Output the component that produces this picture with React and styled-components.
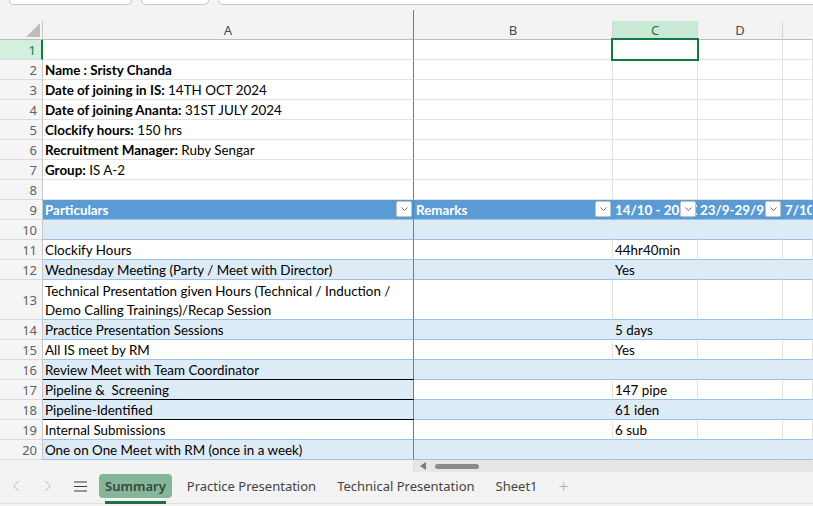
import styled, { createGlobalStyle } from 'styled-components';

const COLS = '43px 371px 199px 85px 85px 1fr';
const CELL_FONT = "Lato, 'Liberation Sans', sans-serif";
const UI_FONT = "'Noto Sans', 'Open Sans', sans-serif";

const fills = {
  plain: { bg: '#ffffff', right: '#e1e1e1', bottom: '#e1e1e1' },
  head: { bg: '#5b9bd5', right: '#5b9bd5', bottom: '#9bc2e6' },
  band: { bg: '#ddebf7', right: '#ddebf7', bottom: '#9bc2e6' },
  white: { bg: '#ffffff', right: '#e1e1e1', bottom: '#9bc2e6' },
};

const infoRows = [
  { n: 1 },
  { n: 2, label: 'Name : Sristy Chanda' },
  { n: 3, label: 'Date of joining in IS:', value: ' 14TH OCT 2024' },
  { n: 4, label: 'Date of joining Ananta:', value: ' 31ST JULY 2024' },
  { n: 5, label: 'Clockify hours:', value: ' 150 hrs' },
  { n: 6, label: 'Recruitment Manager:', value: ' Ruby Sengar' },
  { n: 7, label: 'Group:', value: ' IS A-2' },
  { n: 8 },
];

const headers = ['Particulars', 'Remarks', '14/10 - 20/10', '23/9-29/9', '7/10-13/10'];

const tableRows = [
  { n: 10, kind: 'band' },
  { n: 11, kind: 'white', a: 'Clockify Hours', c: '44hr40min' },
  { n: 12, kind: 'band', a: 'Wednesday Meeting (Party / Meet with Director)', c: 'Yes' },
  {
    n: 13,
    kind: 'white',
    h: 40,
    a: ['Technical Presentation given Hours (Technical / Induction /', 'Demo Calling Trainings)/Recap Session'],
  },
  { n: 14, kind: 'band', a: 'Practice Presentation Sessions', c: '5 days' },
  { n: 15, kind: 'white', a: 'All IS meet by RM', c: 'Yes' },
  { n: 16, kind: 'band', a: 'Review Meet with Team Coordinator', edge: true },
  { n: 17, kind: 'white', aFill: 'band', a: 'Pipeline &\u00a0 Screening', c: '147 pipe', edge: true },
  { n: 18, kind: 'band', a: 'Pipeline-Identified', c: '61 iden', edge: true },
  { n: 19, kind: 'white', a: 'Internal Submissions', c: '6 sub' },
  { n: 20, kind: 'band', a: 'One on One Meet with RM (once in a week)' },
];

const tabs = ['Practice Presentation', 'Technical Presentation', 'Sheet1'];

const Chevron = () => (
  <svg width="9" height="6" viewBox="0 0 9 6">
    <path d="M1.5 1.5 L4.5 4.5 L7.5 1.5" fill="none" stroke="#707070" strokeWidth="1" />
  </svg>
);

const App = () => {
  return (
    <>
      <GlobalStyle />
      <Window>
        <TopStrip>
          <Field $w="123px" />
          <Field $w="68px" />
          <Field $w="620px" />
        </TopStrip>

        <HeaderRow>
          <Corner>
            <svg width="14" height="14" viewBox="0 0 14 14">
              <polygon points="14,0 14,14 0,14" fill="#bdbdbd" />
            </svg>
          </Corner>
          <ColHead $frozen>A</ColHead>
          <ColHead>B</ColHead>
          <ColHead $active>C</ColHead>
          <ColHead>D</ColHead>
          <ColHead $last />
        </HeaderRow>

        <Sheet>
          {infoRows.map((r) => (
            <SheetRow key={r.n}>
              <RowHead $active={r.n === 1}>{r.n}</RowHead>
              <Cell $kind="plain" $frozen>
                {r.label && <b>{r.label}</b>}
                {r.value}
              </Cell>
              <Cell $kind="plain" />
              <Cell $kind="plain">{r.n === 1 && <Selection />}</Cell>
              <Cell $kind="plain" />
              <Cell $kind="plain" />
            </SheetRow>
          ))}

          <SheetRow>
            <RowHead>9</RowHead>
            {headers.map((h, i) => (
              <Cell key={h} $kind="head" $frozen={i === 0}>
                {h}
                {i < 4 && (
                  <FilterBtn>
                    <Chevron />
                  </FilterBtn>
                )}
              </Cell>
            ))}
          </SheetRow>

          {tableRows.map((r) => (
            <SheetRow key={r.n} $h={r.h}>
              <RowHead>{r.n}</RowHead>
              <Cell $kind={r.aFill || r.kind} $frozen $edge={r.edge}>
                {Array.isArray(r.a)
                  ? r.a.map((line) => <Line key={line}>{line}</Line>)
                  : r.a}
              </Cell>
              <Cell $kind={r.kind} />
              <Cell $kind={r.kind}>{r.c}</Cell>
              <Cell $kind={r.kind} />
              <Cell $kind={r.kind} />
            </SheetRow>
          ))}
        </Sheet>

        <ScrollStrip>
          <ScrollGap />
          <ScrollTrack>
            <svg width="6" height="8" viewBox="0 0 6 8">
              <polygon points="6,0 6,8 0,4" fill="#7a7a7a" />
            </svg>
            <Thumb />
          </ScrollTrack>
        </ScrollStrip>

        <TabBar>
          <NavGroup>
            <NavBtn>
              <svg width="8" height="12" viewBox="0 0 8 12">
                <path d="M6.5 1 L1.5 6 L6.5 11" fill="none" stroke="#b4b4b4" strokeWidth="1" />
              </svg>
            </NavBtn>
            <NavBtn>
              <svg width="8" height="12" viewBox="0 0 8 12">
                <path d="M1.5 1 L6.5 6 L1.5 11" fill="none" stroke="#b4b4b4" strokeWidth="1" />
              </svg>
            </NavBtn>
            <NavBtn $menu>
              <svg width="13" height="11" viewBox="0 0 13 11">
                <path d="M0 1 H13 M0 5.5 H13 M0 10 H13" stroke="#3c3c3c" strokeWidth="1.2" />
              </svg>
            </NavBtn>
          </NavGroup>
          <Tab $active>Summary</Tab>
          {tabs.map((t) => (
            <Tab key={t}>{t}</Tab>
          ))}
          <AddTab>+</AddTab>
        </TabBar>
      </Window>
    </>
  );
};

export default App;

// Styled Components
const GlobalStyle = createGlobalStyle`
  body {
    margin: 0;
    background: #ffffff;
    overflow: hidden;
  }
`;

const Window = styled.div`
  width: 813px;
  height: 506px;
  display: flex;
  flex-direction: column;
  background: #f3f3f3;
  overflow: hidden;
`;

const TopStrip = styled.div`
  height: 10px;
  display: flex;
  align-items: flex-start;
  gap: 9px;
  padding-left: 9px;
`;

const Field = styled.div`
  flex: none;
  width: ${(p) => p.$w};
  height: 5px;
  box-sizing: border-box;
  background: #ffffff;
  border: 1px solid #c4c4c4;
  border-top: none;
  border-radius: 0 0 5px 5px;
`;

const HeaderRow = styled.div`
  display: grid;
  grid-template-columns: ${COLS};
  height: 30px;
  align-items: end;
`;

const Corner = styled.div`
  height: 19px;
  box-sizing: border-box;
  display: flex;
  justify-content: flex-end;
  align-items: flex-end;
  padding: 0 2px 2px 0;
  border-right: 1px solid #c6c6c6;
  border-bottom: 1px solid #bdbdbd;
`;

const ColHead = styled.div`
  box-sizing: border-box;
  height: ${(p) => (p.$frozen ? '30px' : '19px')};
  display: flex;
  align-items: center;
  justify-content: center;
  padding-top: ${(p) => (p.$frozen ? '10px' : '0')};
  padding-bottom: ${(p) => (p.$frozen ? '0' : '1px')};
  font: 13px ${UI_FONT};
  color: ${(p) => (p.$active ? '#107c41' : '#4a4a4a')};
  background: ${(p) => (p.$active ? '#caead7' : 'transparent')};
  border-right: 1px solid ${(p) => (p.$frozen ? '#7a7a7a' : p.$last ? 'transparent' : '#d6d6d6')};
  border-bottom: 1px solid #bdbdbd;
`;

const Sheet = styled.div`
  display: flex;
  flex-direction: column;
  background: #ffffff;
`;

const SheetRow = styled.div`
  display: grid;
  grid-template-columns: ${COLS};
  height: ${(p) => p.$h || 20}px;
  overflow: visible;
`;

const RowHead = styled.div`
  box-sizing: border-box;
  display: flex;
  align-items: center;
  justify-content: flex-end;
  padding-right: 5px;
  font: 13px ${UI_FONT};
  color: ${(p) => (p.$active ? '#107c41' : '#616161')};
  background: ${(p) => (p.$active ? '#d3efde' : '#f5f5f5')};
  border-right: ${(p) => (p.$active ? '2px solid #107c41' : '1px solid #c6c6c6')};
  border-bottom: 1px solid #dadada;
`;

const Cell = styled.div`
  position: relative;
  box-sizing: border-box;
  min-height: 0;
  padding: 1px 2px 0;
  font: ${(p) => (p.$kind === 'head' ? '700' : '400')} 13.4px ${CELL_FONT};
  line-height: 18px;
  white-space: nowrap;
  overflow: ${(p) => (p.$kind === 'head' ? 'hidden' : 'visible')};
  color: ${(p) => (p.$kind === 'head' ? '#ffffff' : '#000000')};
  background: ${(p) => fills[p.$kind].bg};
  border-right: 1px solid ${(p) => (p.$frozen ? '#7a7a7a' : fills[p.$kind].right)};
  border-bottom: 1px solid ${(p) => (p.$edge ? '#000000' : fills[p.$kind].bottom)};

  b {
    font-weight: 700;
  }
`;

const Line = styled.div`
  height: 19px;
  line-height: 20px;
`;

const Selection = styled.span`
  position: absolute;
  top: -2px;
  left: -2px;
  right: -2px;
  bottom: -2px;
  border: 2px solid #107c41;
  z-index: 2;
`;

const FilterBtn = styled.span`
  position: absolute;
  top: 1px;
  right: 1px;
  width: 16px;
  height: 16px;
  box-sizing: border-box;
  display: flex;
  align-items: center;
  justify-content: center;
  background: #ffffff;
  border: 1px solid #c2c2c2;
  border-radius: 2px;
`;

const ScrollStrip = styled.div`
  display: flex;
  height: 12px;
`;

const ScrollGap = styled.div`
  width: 414px;
  box-sizing: border-box;
  border-right: 1px solid #e0e0e0;
`;

const ScrollTrack = styled.div`
  flex: 1;
  display: flex;
  align-items: center;
  gap: 9px;
  padding-left: 6px;
  background: #e6e6e6;
`;

const Thumb = styled.div`
  width: 44px;
  height: 5px;
  border-radius: 3px;
  background: #8a8a8a;
`;

const TabBar = styled.div`
  height: 32px;
  display: flex;
  align-items: flex-start;
  gap: 9px;
  padding-top: 2px;
  box-sizing: border-box;
  border-bottom: 1px solid #e2e2e2;
  font: 13px ${UI_FONT};
`;

const NavGroup = styled.div`
  width: 90px;
  display: flex;
`;

const NavBtn = styled.div`
  width: ${(p) => (p.$menu ? '26px' : '32px')};
  height: 24px;
  display: flex;
  align-items: center;
  justify-content: ${(p) => (p.$menu ? 'flex-start' : 'center')};
  padding-left: ${(p) => (p.$menu ? '10px' : '0')};
  box-sizing: border-box;
`;

const Tab = styled.div`
  position: relative;
  height: 24px;
  display: flex;
  align-items: center;
  padding: 0 6px;
  border-radius: 4px;
  font-weight: ${(p) => (p.$active ? 600 : 400)};
  color: ${(p) => (p.$active ? '#34463b' : '#444444')};
  background: ${(p) => (p.$active ? '#86b69a' : 'transparent')};

  &::after {
    content: '';
    display: ${(p) => (p.$active ? 'block' : 'none')};
    position: absolute;
    left: 6px;
    right: 6px;
    bottom: -6px;
    height: 3px;
    background: #1f6f43;
  }
`;

const AddTab = styled.div`
  height: 24px;
  display: flex;
  align-items: center;
  padding: 0 6px;
  font-size: 18px;
  font-weight: 300;
  color: #b0b0b0;
`;
